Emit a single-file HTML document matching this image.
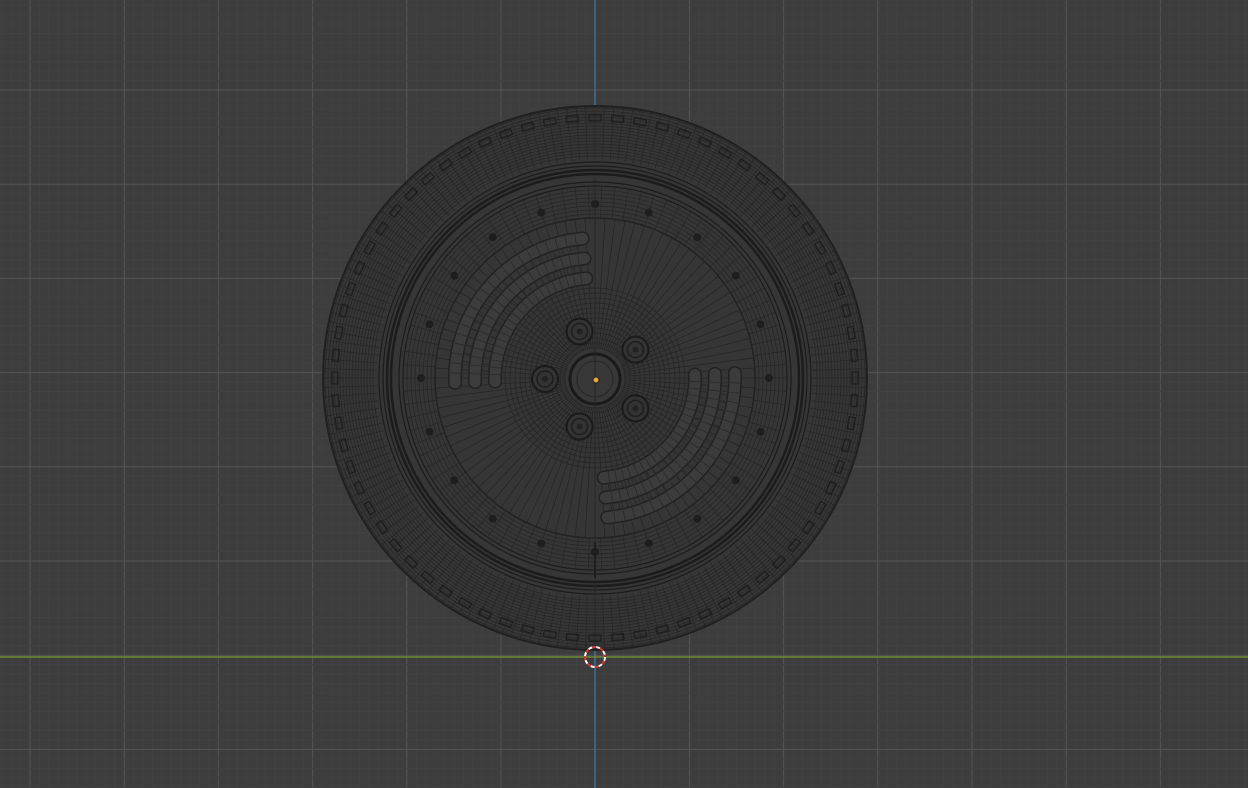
<!DOCTYPE html>
<html><head><meta charset="utf-8"><style>
html,body{margin:0;padding:0;background:#3d3d3d;overflow:hidden;width:1248px;height:788px}
svg{display:block;position:absolute;left:0;top:0}
</style></head><body>
<svg id="s" width="1248" height="788" xmlns="http://www.w3.org/2000/svg">
<rect width="1248" height="788" fill="#3d3d3d"/>
<g id="grid"></g>
<line x1="595" y1="0" x2="595" y2="788" stroke="#3f6e98" stroke-width="1.5"/>
<line x1="0" y1="657" x2="1248" y2="657" stroke="#6d8c34" stroke-width="1.5"/>
<g id="wheel"></g>
<circle cx="595" cy="657" r="10" fill="none" stroke="#fff" stroke-width="2" stroke-dasharray="4 4"/>
<circle cx="595" cy="657" r="10" fill="none" stroke="#d33" stroke-width="2" stroke-dasharray="4 4" stroke-dashoffset="4"/>
<circle cx="596" cy="380" r="3" fill="#f2a23a" stroke="#222" stroke-width="1"/>
</svg>
<script>
var NS="http://www.w3.org/2000/svg";
function el(p,t,a){var e=document.createElementNS(NS,t);for(var k in a)e.setAttribute(k,a[k]);p.appendChild(e);return e;}
var g=document.getElementById('grid');
for(var i=-10;i<140;i++){var x=30+i*9.42;el(g,'line',{x1:x,y1:0,x2:x,y2:788,stroke:(i%10==0)?'#555':'#414141','stroke-width':1});}
for(var i=-20;i<100;i++){var y=90+i*9.42;el(g,'line',{x1:0,y1:y,x2:1248,y2:y,stroke:(i%10==0)?'#555':'#414141','stroke-width':1});}
var w=document.getElementById('wheel');var cx=595,cy=378,R=272;
el(w,'circle',{cx:cx,cy:cy,r:R,fill:'#363636',stroke:'#202020','stroke-width':2});
var L='#262626';
for(var r=222;r<=270;r+=3)el(w,'circle',{cx:cx,cy:cy,r:r,fill:'none',stroke:L,'stroke-width':0.7});
for(var a=0;a<360;a+=2){var t=a*Math.PI/180;el(w,'line',{x1:cx+218*Math.cos(t),y1:cy+218*Math.sin(t),x2:cx+271*Math.cos(t),y2:cy+271*Math.sin(t),stroke:L,'stroke-width':0.7});}
for(var a=0;a<360;a+=5){var t=a*Math.PI/180;var x=cx+260*Math.cos(t),y=cy+260*Math.sin(t);
 el(w,'rect',{x:x-6,y:y-3,width:12,height:6,fill:'none',stroke:'#1e1e1e','stroke-width':1.2,transform:'rotate('+(a+90)+' '+x+' '+y+')'});}
[204,208,212,216,196,192].forEach(function(r,i){el(w,'circle',{cx:cx,cy:cy,r:r,fill:'none',stroke:'#1c1c1c','stroke-width':i<2?2.5:1.2});});
for(var r=160;r<=190;r+=4)el(w,'circle',{cx:cx,cy:cy,r:r,fill:'none',stroke:L,'stroke-width':0.8});
for(var a=0;a<360;a+=4){var t=a*Math.PI/180;el(w,'line',{x1:cx+160*Math.cos(t),y1:cy+160*Math.sin(t),x2:cx+192*Math.cos(t),y2:cy+192*Math.sin(t),stroke:L,'stroke-width':0.7});}
for(var i=0;i<20;i++){var t=(i*18-90)*Math.PI/180;el(w,'circle',{cx:cx+174*Math.cos(t),cy:cy+174*Math.sin(t),r:4,fill:'#1e1e1e'});}
for(var a=0;a<360;a+=3.6){var t=a*Math.PI/180;el(w,'line',{x1:cx+30*Math.cos(t),y1:cy+30*Math.sin(t),x2:cx+160*Math.cos(t),y2:cy+160*Math.sin(t),stroke:L,'stroke-width':0.8});}
for(var r=30;r<=92;r+=5)el(w,'circle',{cx:cx,cy:cy,r:r,fill:'none',stroke:L,'stroke-width':0.8});
el(w,'circle',{cx:cx,cy:cy,r:160,fill:'none',stroke:'#222','stroke-width':1.5});
function arc(r,a0,a1){var t0=a0*Math.PI/180,t1=a1*Math.PI/180;return 'M'+(cx+r*Math.cos(t0))+' '+(cy+r*Math.sin(t0))+' A'+r+' '+r+' 0 0 1 '+(cx+r*Math.cos(t1))+' '+(cy+r*Math.sin(t1));}
[100,120,140].forEach(function(r){
 [[178,265],[-2,85]].forEach(function(s){
 el(w,'path',{d:arc(r,s[0],s[1]),fill:'none',stroke:'#222','stroke-width':14,'stroke-linecap':'round'});
 el(w,'path',{d:arc(r,s[0],s[1]),fill:'none',stroke:'#3c3c3c','stroke-width':11,'stroke-linecap':'round'});});
});
for(var a=182;a<265;a+=4){var t=a*Math.PI/180;el(w,'line',{x1:cx+93*Math.cos(t),y1:cy+93*Math.sin(t),x2:cx+147*Math.cos(t),y2:cy+147*Math.sin(t),stroke:'#2a2a2a','stroke-width':0.8});
 var t2=(a-180)*Math.PI/180;el(w,'line',{x1:cx+93*Math.cos(t2),y1:cy+93*Math.sin(t2),x2:cx+147*Math.cos(t2),y2:cy+147*Math.sin(t2),stroke:'#2a2a2a','stroke-width':0.8});}
el(w,'circle',{cx:cx,cy:cy+1,r:25,fill:'#383838',stroke:'#1a1a1a','stroke-width':3});
el(w,'circle',{cx:cx,cy:cy+1,r:18,fill:'none',stroke:'#262626','stroke-width':1});
for(var i=0;i<5;i++){var t=(-108+i*72)*Math.PI/180;var x=cx+50*Math.cos(t),y=cy+1+50*Math.sin(t);
 el(w,'circle',{cx:x,cy:y,r:13,fill:'#333',stroke:'#1a1a1a','stroke-width':2});
 el(w,'circle',{cx:x,cy:y,r:8,fill:'none',stroke:'#1e1e1e','stroke-width':1.5});
 el(w,'circle',{cx:x,cy:y,r:3,fill:'#222'});}
el(w,'line',{x1:cx,y1:cy-200,x2:cx,y2:cy+272,stroke:'#262626','stroke-width':1});
el(w,'line',{x1:cx,y1:cy+165,x2:cx,y2:cy+200,stroke:'#1e1e1e','stroke-width':2});
</script>
</body></html>
